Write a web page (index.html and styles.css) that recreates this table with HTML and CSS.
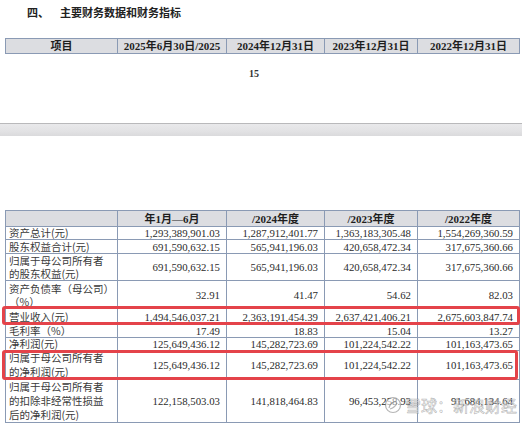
FILE: index.html
```html
<!DOCTYPE html>
<html lang="zh">
<head>
<meta charset="utf-8">
<link rel="stylesheet" href="styles.css">
</head>
<body>
<div class="page">
  <div class="title"><span class="sec">四、</span><span>主要财务数据和财务指标</span></div>
  <table class="grid top">
    <colgroup><col class="c1"><col class="c2"><col class="c3"><col class="c4"><col class="c5"></colgroup>
    <tr class="head h15">
      <th>项目</th><th>2025年6月30日/2025</th><th>2024年12月31日</th><th>2023年12月31日</th><th>2022年12月31日</th>
    </tr>
  </table>
  <div class="pageno">15</div>
  <div class="band"></div>
  <div class="wrap">
    <table class="grid main">
      <colgroup><col class="c1"><col class="c2"><col class="c3"><col class="c4"><col class="c5"></colgroup>
      <tr class="head h16"><th></th><th>年1月—6月</th><th>/2024年度</th><th>/2023年度</th><th>/2022年度</th></tr>
      <tr class="h13"><td class="lbl">资产总计(元)</td><td>1,293,389,901.03</td><td>1,287,912,401.77</td><td>1,363,183,305.48</td><td>1,554,269,360.59</td></tr>
      <tr class="h14"><td class="lbl">股东权益合计(元)</td><td>691,590,632.15</td><td>565,941,196.03</td><td>420,658,472.34</td><td>317,675,360.66</td></tr>
      <tr class="h27"><td class="lbl">归属于母公司所有者<br>的股东权益(元)</td><td>691,590,632.15</td><td>565,941,196.03</td><td>420,658,472.34</td><td>317,675,360.66</td></tr>
      <tr class="h28"><td class="lbl">资产负债率（母公司）<br>（%）</td><td>32.91</td><td>41.47</td><td>54.62</td><td>82.03</td></tr>
      <tr class="h16"><td class="lbl">营业收入(元)</td><td>1,494,546,037.21</td><td>2,363,191,454.39</td><td>2,637,421,406.21</td><td>2,675,603,847.74</td></tr>
      <tr class="h13"><td class="lbl">毛利率（%）</td><td>17.49</td><td>18.83</td><td>15.04</td><td>13.27</td></tr>
      <tr class="h13"><td class="lbl">净利润(元)</td><td>125,649,436.12</td><td>145,282,723.69</td><td>101,224,542.22</td><td>101,163,473.65</td></tr>
      <tr class="h29"><td class="lbl">归属于母公司所有者<br>的净利润(元)</td><td>125,649,436.12</td><td>145,282,723.69</td><td>101,224,542.22</td><td>101,163,473.65</td></tr>
      <tr class="h43"><td class="lbl">归属于母公司所有者<br>的扣除非经常性损益<br>后的净利润(元)</td><td>122,158,503.03</td><td>141,818,464.83</td><td>96,453,258.93</td><td>91,684,134.64</td></tr>
    </table>
    <div class="mark mark1"></div>
    <div class="mark mark2"></div>
    <div class="wm">
      <svg class="wm-logo" width="18" height="18" viewBox="0 0 18 18"><circle cx="9" cy="9" r="7.5" fill="rgba(255,255,255,0.5)" stroke="rgba(110,110,110,0.5)" stroke-width="1.2"/><path d="M5 12 C6 7, 10 5, 13 6 M6 13 C9 12, 12 10, 13 7" fill="none" stroke="rgba(110,110,110,0.5)" stroke-width="1.1"/></svg>
      <span>雪球：新浪财经</span>
    </div>
  </div>
</div>
</body>
</html>
```

FILE: styles.css
```css
html, body {
  margin: 0;
  padding: 0;
  background: #ffffff;
}
.page {
  width: 522px;
  height: 427px;
  overflow: hidden;
  position: relative;
  font-family: "Liberation Serif", "Noto Sans CJK SC", serif;
  color: #2b2b2b;
}
.title {
  padding: 5px 0 0 27px;
  height: 38px;
  box-sizing: border-box;
  font-family: "Noto Sans CJK SC", sans-serif;
  font-weight: 700;
  font-size: 11px;
  line-height: 15px;
  color: #222;
}
.title .sec {
  display: inline-block;
  width: 33px;
}
.grid {
  border-collapse: collapse;
  table-layout: fixed;
  width: 514px;
  margin-left: 5px;
  font-size: 11px;
}
.grid .c1 { width: 112px; }
.grid .c2 { width: 109px; }
.grid .c3 { width: 98px; }
.grid .c4 { width: 93px; }
.grid .c5 { width: 102px; }
.grid th, .grid td {
  border: 1px solid #8a9ab4;
  padding: 0 6px 0 3px;
  line-height: 12px;
  white-space: nowrap;
  box-sizing: border-box;
}
.grid th {
  background: #dcdde1;
  font-weight: 700;
  text-align: center;
  color: #1e1e1e;
  padding: 0;
}
.grid td {
  text-align: right;
  vertical-align: middle;
  font-size: 10.8px;
}
.grid td.lbl {
  text-align: left;
  font-family: "Noto Sans CJK SC", sans-serif;
  font-size: 10.5px;
  color: #3a3a3a;
  line-height: 12px;
}
.h27 td.lbl, .h28 td.lbl { line-height: 13px; }
.h29 td.lbl, .h43 td.lbl { line-height: 14px; }
.h13 td { height: 13px; }
.h14 td { height: 14px; }
.h15 th { height: 15px; line-height: 14px; }
.h16 th, .h16 td { height: 16px; }
.h27 td { height: 27px; }
.h28 td { height: 28px; }
.h29 td { height: 29px; }
.h43 td { height: 43px; }
.pageno {
  margin-top: 13px;
  padding-left: 249px;
  font-size: 10px;
  font-weight: 700;
  line-height: 14px;
  color: #333;
}
.band {
  margin-top: 42px;
  height: 12px;
  background: linear-gradient(#e9e9eb, #e2e2e4 60%, #dadadc);
  border-top: 1px solid #b9b9bb;
}
.wrap {
  position: relative;
  margin-top: 74px;
}
.mark {
  position: absolute;
  left: 2px;
  border: 3px solid #e4434a;
  border-radius: 3px;
}
.mark1 {
  top: 96px;
  height: 13px;
  width: 512px;
}
.mark2 {
  top: 140px;
  height: 24px;
  width: 510px;
}
.wm {
  position: absolute;
  left: 384px;
  top: 186px;
  display: flex;
  align-items: center;
  gap: 3px;
  font-family: "Noto Sans CJK SC", sans-serif;
  font-size: 16px;
  line-height: 18px;
  color: rgba(255, 255, 255, 0.55);
  -webkit-text-stroke: 0.6px rgba(110, 110, 110, 0.5);
}
```
